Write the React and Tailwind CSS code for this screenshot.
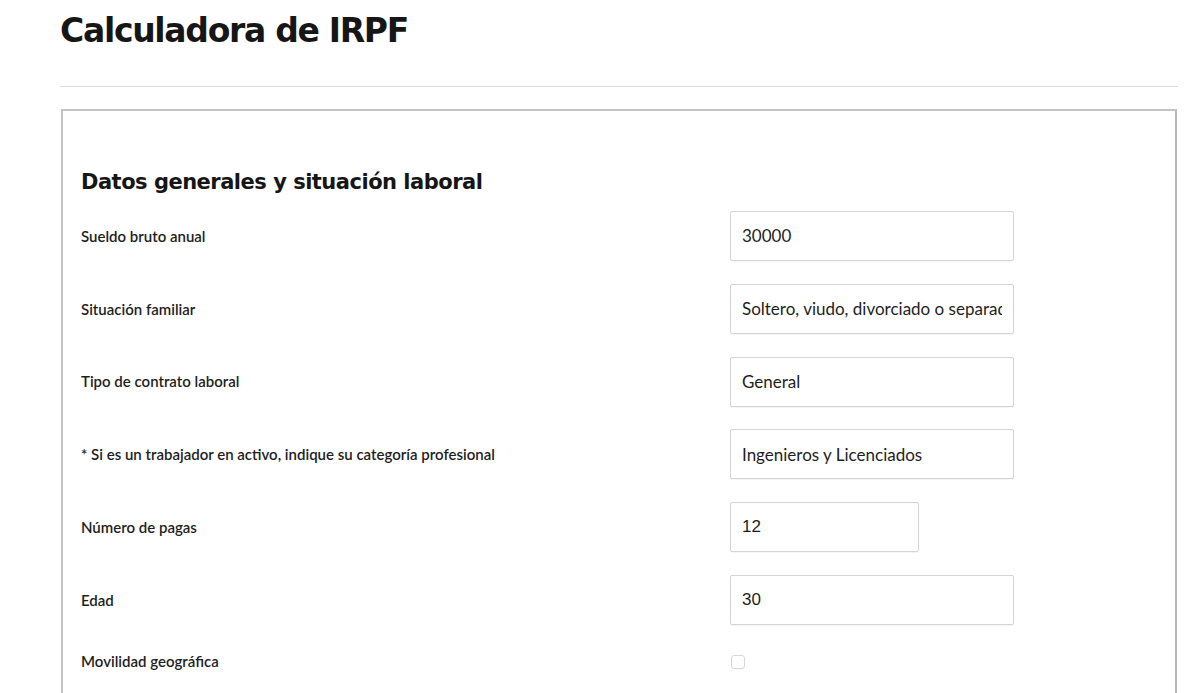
import React from "react";

const rows = [
  { label: "Sueldo bruto anual", value: "30000", w: "w-[284px]", font: "lato" },
  { label: "Situación familiar", value: "Soltero, viudo, divorciado o separado", w: "w-[284px]", font: "lato" },
  { label: "Tipo de contrato laboral", value: "General", w: "w-[284px]", font: "lato" },
  { label: "* Si es un trabajador en activo, indique su categoría profesional", value: "Ingenieros y Licenciados", w: "w-[284px]", font: "lato" },
  { label: "Número de pagas", value: "12", w: "w-[189px]", font: "arial" },
  { label: "Edad", value: "30", w: "w-[284px]", font: "arial" },
];

export default function App() {
  return (
    <div className="min-h-[693px] bg-white text-[#222] overflow-hidden">
      <div className="pl-[60px] pr-[22px]">
        <h1 className="pt-[11px] h-[86px] text-[33px] leading-[40px] font-bold tracking-[-1.3px] text-[#161616] font-['DejaVu_Sans',sans-serif]">
          Calculadora de IRPF
        </h1>
        <div className="h-px bg-[#dcdcdc]" />
        <div className="mt-[22px] border-2 border-[#c4c4c4] border-r-[#b8b8b8] mx-[1px] pl-[18px] pt-[56px] pb-[40px]">
          <h2 className="text-[21px] leading-[30px] font-bold tracking-[-0.5px] text-[#161616] font-['DejaVu_Sans',sans-serif]">
            Datos generales y situación laboral
          </h2>
          <div className="mt-[14px] flex flex-col gap-[22.8px]">
            {rows.map((r) => (
              <div key={r.label} className="flex items-center">
                <div className="w-[649px] shrink-0 text-[15px] font-semibold text-[#1e1e1e] font-['Lato',sans-serif]">
                  {r.label}
                </div>
                <div
                  className={`${r.w} h-[50px] border border-[#d4d4d4] rounded-[2px] shadow-[0_1px_1px_rgba(0,0,0,0.04)] flex items-center px-[11px] text-[17px] text-[#1e1e1e] ${
                    r.font === "arial" ? "font-['Liberation_Sans',sans-serif]" : "font-['Lato',sans-serif]"
                  }`}
                >
                  <div className="flex-1 overflow-hidden whitespace-nowrap">{r.value}</div>
                </div>
              </div>
            ))}
            <div className="flex items-center mt-[2px]">
              <div className="w-[650px] shrink-0 text-[15px] font-semibold text-[#1e1e1e] font-['Lato',sans-serif]">
                Movilidad geográfica
              </div>
              <div className="w-[14px] h-[14px] border border-[#d8d8d8] rounded-[3px] mt-[2px]" />
            </div>
          </div>
        </div>
      </div>
    </div>
  );
}
